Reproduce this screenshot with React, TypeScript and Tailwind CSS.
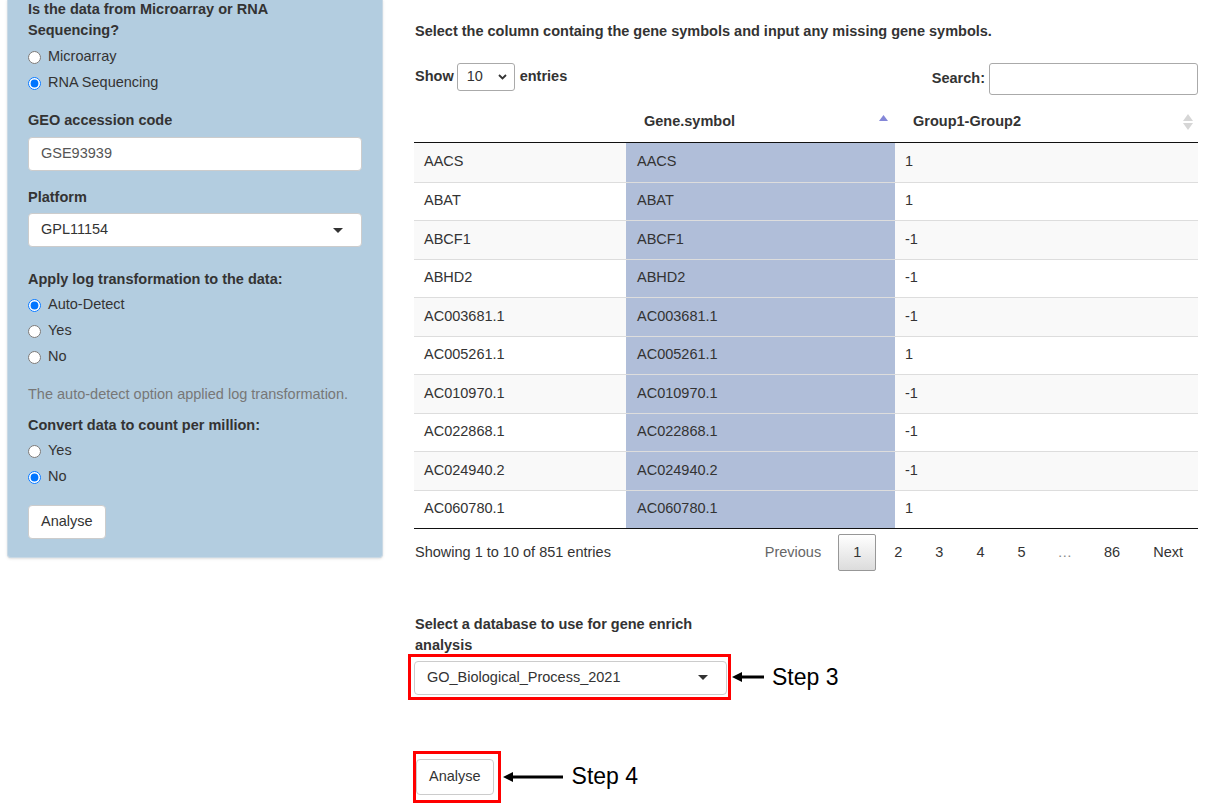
import React from 'react';

const rows = [
  ['AACS', '1'],
  ['ABAT', '1'],
  ['ABCF1', '-1'],
  ['ABHD2', '-1'],
  ['AC003681.1', '-1'],
  ['AC005261.1', '1'],
  ['AC010970.1', '-1'],
  ['AC022868.1', '-1'],
  ['AC024940.2', '-1'],
  ['AC060780.1', '1'],
];

function Radio({ label, checked }: { label: string; checked?: boolean }) {
  return (
    <label className="flex h-[26px] items-center gap-[7px] text-[14.5px] text-[#333]">
      <input
        type="radio"
        readOnly
        checked={!!checked}
        className="m-0 h-[13px] w-[13px] accent-[#0075ff]"
      />
      <span>{label}</span>
    </label>
  );
}

function Caret() {
  return (
    <svg width="10" height="5" viewBox="0 0 10 5">
      <path d="M0 0 L10 0 L5 5 Z" fill="#333" />
    </svg>
  );
}

function LeftArrow({ width }: { width: number }) {
  return (
    <svg width={width} height="12" viewBox={`0 0 ${width} 12`}>
      <line x1="8" y1="6" x2={width} y2="6" stroke="#000" strokeWidth="3" />
      <path d="M0 6 L10 1 L10 11 Z" fill="#000" />
    </svg>
  );
}

export default function App() {
  return (
    <div
      className="flex h-[803px] w-[1212px] overflow-hidden bg-white text-[#333]"
      style={{ fontFamily: '"Liberation Sans", Arial, sans-serif' }}
    >
      {/* sidebar */}
      <div className="ml-[7px] w-[376px] shrink-0">
        <div className="-mt-[1px] rounded-b-[4px] border border-t-0 border-[#c9d9e5] bg-[#b3cde0] px-[20px] pb-[18px] shadow-sm">
          <div className="w-[270px] text-[14.5px] font-bold leading-[21px]">
            Is the data from Microarray or RNA Sequencing?
          </div>
          <div className="mt-[3px]">
            <Radio label="Microarray" />
            <Radio label="RNA Sequencing" checked />
          </div>

          <div className="mt-[14px] text-[14.5px] font-bold leading-[20px]">GEO accession code</div>
          <div className="mt-[7px] flex h-[34px] items-center rounded-[4px] border border-[#ccc] bg-white px-[12px] text-[14.5px] text-[#555]">
            GSE93939
          </div>

          <div className="mt-[16px] text-[14.5px] font-bold leading-[20px]">Platform</div>
          <div className="mt-[6px] flex h-[34px] items-center justify-between rounded-[4px] border border-[#ccc] bg-white pl-[12px] pr-[18px] text-[14.5px] text-[#333]">
            <span>GPL11154</span>
            <Caret />
          </div>

          <div className="mt-[22px] text-[14.5px] font-bold leading-[20px]">
            Apply log transformation to the data:
          </div>
          <div className="mt-[3px]">
            <Radio label="Auto-Detect" checked />
            <Radio label="Yes" />
            <Radio label="No" />
          </div>

          <div className="mt-[14px] text-[14.5px] leading-[20px] text-[#777]">
            The auto-detect option applied log transformation.
          </div>

          <div className="mt-[11px] text-[14.5px] font-bold leading-[20px]">
            Convert data to count per million:
          </div>
          <div className="mt-[3px]">
            <Radio label="Yes" />
            <Radio label="No" checked />
          </div>

          <button className="mt-[15px] flex h-[34px] items-center rounded-[4px] border border-[#ccc] bg-white px-[12px] text-[14.5px] text-[#333]">
            Analyse
          </button>
        </div>
      </div>

      {/* main */}
      <div className="ml-[31px] w-[784px] shrink-0">
        <div className="mt-[21px] pl-px text-[14.5px] font-bold leading-[20px]">
          Select the column containg the gene symbols and input any missing gene symbols.
        </div>

        <div className="mt-[22px] flex items-start justify-between">
          <div className="flex h-[28px] items-center text-[14.5px] font-bold">
            <span className="pl-px">Show</span>
            <div className="ml-[3px] mr-[5px] flex h-[28px] w-[58px] items-center justify-between rounded-[3px] border border-[#aaa] bg-white pl-[9px] pr-[7px] font-normal">
              <span>10</span>
              <svg width="9" height="6" viewBox="0 0 9 6">
                <polyline points="1,1 4.5,4.5 8,1" fill="none" stroke="#333" strokeWidth="1.8" />
              </svg>
            </div>
            <span>entries</span>
          </div>
          <div className="flex h-[32px] items-center text-[14.5px] font-bold">
            <span>Search:</span>
            <div className="ml-[4px] h-[32px] w-[209px] rounded-[3px] border border-[#aaa] bg-white" />
          </div>
        </div>

        {/* table */}
        <div className="mt-[7px] text-[14.5px]">
          <div className="grid h-[41px] grid-cols-[212px_269px_303px] border-b border-[#111] font-bold">
            <div />
            <div className="flex items-center justify-between pl-[18px] pr-[7px]">
              <span>Gene.symbol</span>
              <svg width="9" height="6" viewBox="0 0 9 6" className="-mt-[8px]">
                <path d="M0 6 L4.5 0 L9 6 Z" fill="#8487d8" />
              </svg>
            </div>
            <div className="flex items-center justify-between pl-[18px] pr-[5px]">
              <span>Group1-Group2</span>
              <svg width="10" height="16" viewBox="0 0 10 16">
                <path d="M0 7 L5 0 L10 7 Z" fill="#d6d6d6" />
                <path d="M0 9 L5 16 L10 9 Z" fill="#d6d6d6" />
              </svg>
            </div>
          </div>
          {rows.map(([g, v], i) => (
            <div
              key={g}
              className={`grid h-[38.5px] grid-cols-[212px_269px_303px] ${i > 0 ? 'border-t border-[#ddd]' : ''} ${i % 2 === 0 ? 'bg-[#f9f9f9]' : 'bg-white'}`}
            >
              <div className="flex items-center pl-[10px]">{g}</div>
              <div className="flex items-center bg-[#b0bed9] pl-[11px]">{g}</div>
              <div className="flex items-center pl-[10px]">{v}</div>
            </div>
          ))}
          <div className="border-t border-[#111]" />
        </div>

        <div className="mt-[4px] flex items-start justify-between text-[14.5px]">
          <div className="mt-[9px] pl-px">Showing 1 to 10 of 851 entries</div>
          <div className="flex items-center">
            <span className="px-[14px] py-[8px] text-[#666]">Previous</span>
            <span className="ml-[3px] flex h-[37px] items-center rounded-[2px] border border-[#979797] bg-gradient-to-b from-white to-[#dcdcdc] px-[14px]">
              1
            </span>
            {['2', '3', '4', '5'].map((n) => (
              <span key={n} className="ml-[3px] border border-transparent px-[14px] py-[8px]">
                {n}
              </span>
            ))}
            <span className="ml-[3px] px-[14px] py-[8px] text-[#888]">…</span>
            <span className="ml-[3px] border border-transparent px-[14px] py-[8px]">86</span>
            <span className="ml-[3px] border border-transparent px-[14px] py-[8px]">Next</span>
          </div>
        </div>

        <div className="mt-[41px] w-[313px] pl-px text-[14.5px] font-bold leading-[21px]">
          Select a database to use for gene enrich analysis
        </div>

        <div className="-ml-[6px] -mt-[2px] flex items-center">
          <div className="border-[3px] border-[#f00] pb-[2px] pl-[3px] pr-[1px] pt-[4px]">
            <div className="flex h-[34px] w-[313px] items-center justify-between rounded-[4px] border border-[#ccc] bg-white pl-[12px] pr-[18px] text-[14.5px]">
              <span>GO_Biological_Process_2021</span>
              <Caret />
            </div>
          </div>
          <div className="ml-px">
            <LeftArrow width={32} />
          </div>
          <span className="ml-[8px] mt-[2px] text-[23px] leading-none text-black">Step 3</span>
        </div>

        <div className="-ml-px mt-[51px] flex items-center">
          <div className="border-[3px] border-[#f00] pb-[5px] pr-[4px] pt-[5px]">
            <button className="flex h-[36px] items-center rounded-[4px] border border-[#ccc] bg-white px-[12px] text-[14.5px] text-[#333]">
              Analyse
            </button>
          </div>
          <div className="ml-[2px]">
            <LeftArrow width={60} />
          </div>
          <span className="ml-[9px] text-[23px] leading-none text-black">Step 4</span>
        </div>
      </div>
    </div>
  );
}
